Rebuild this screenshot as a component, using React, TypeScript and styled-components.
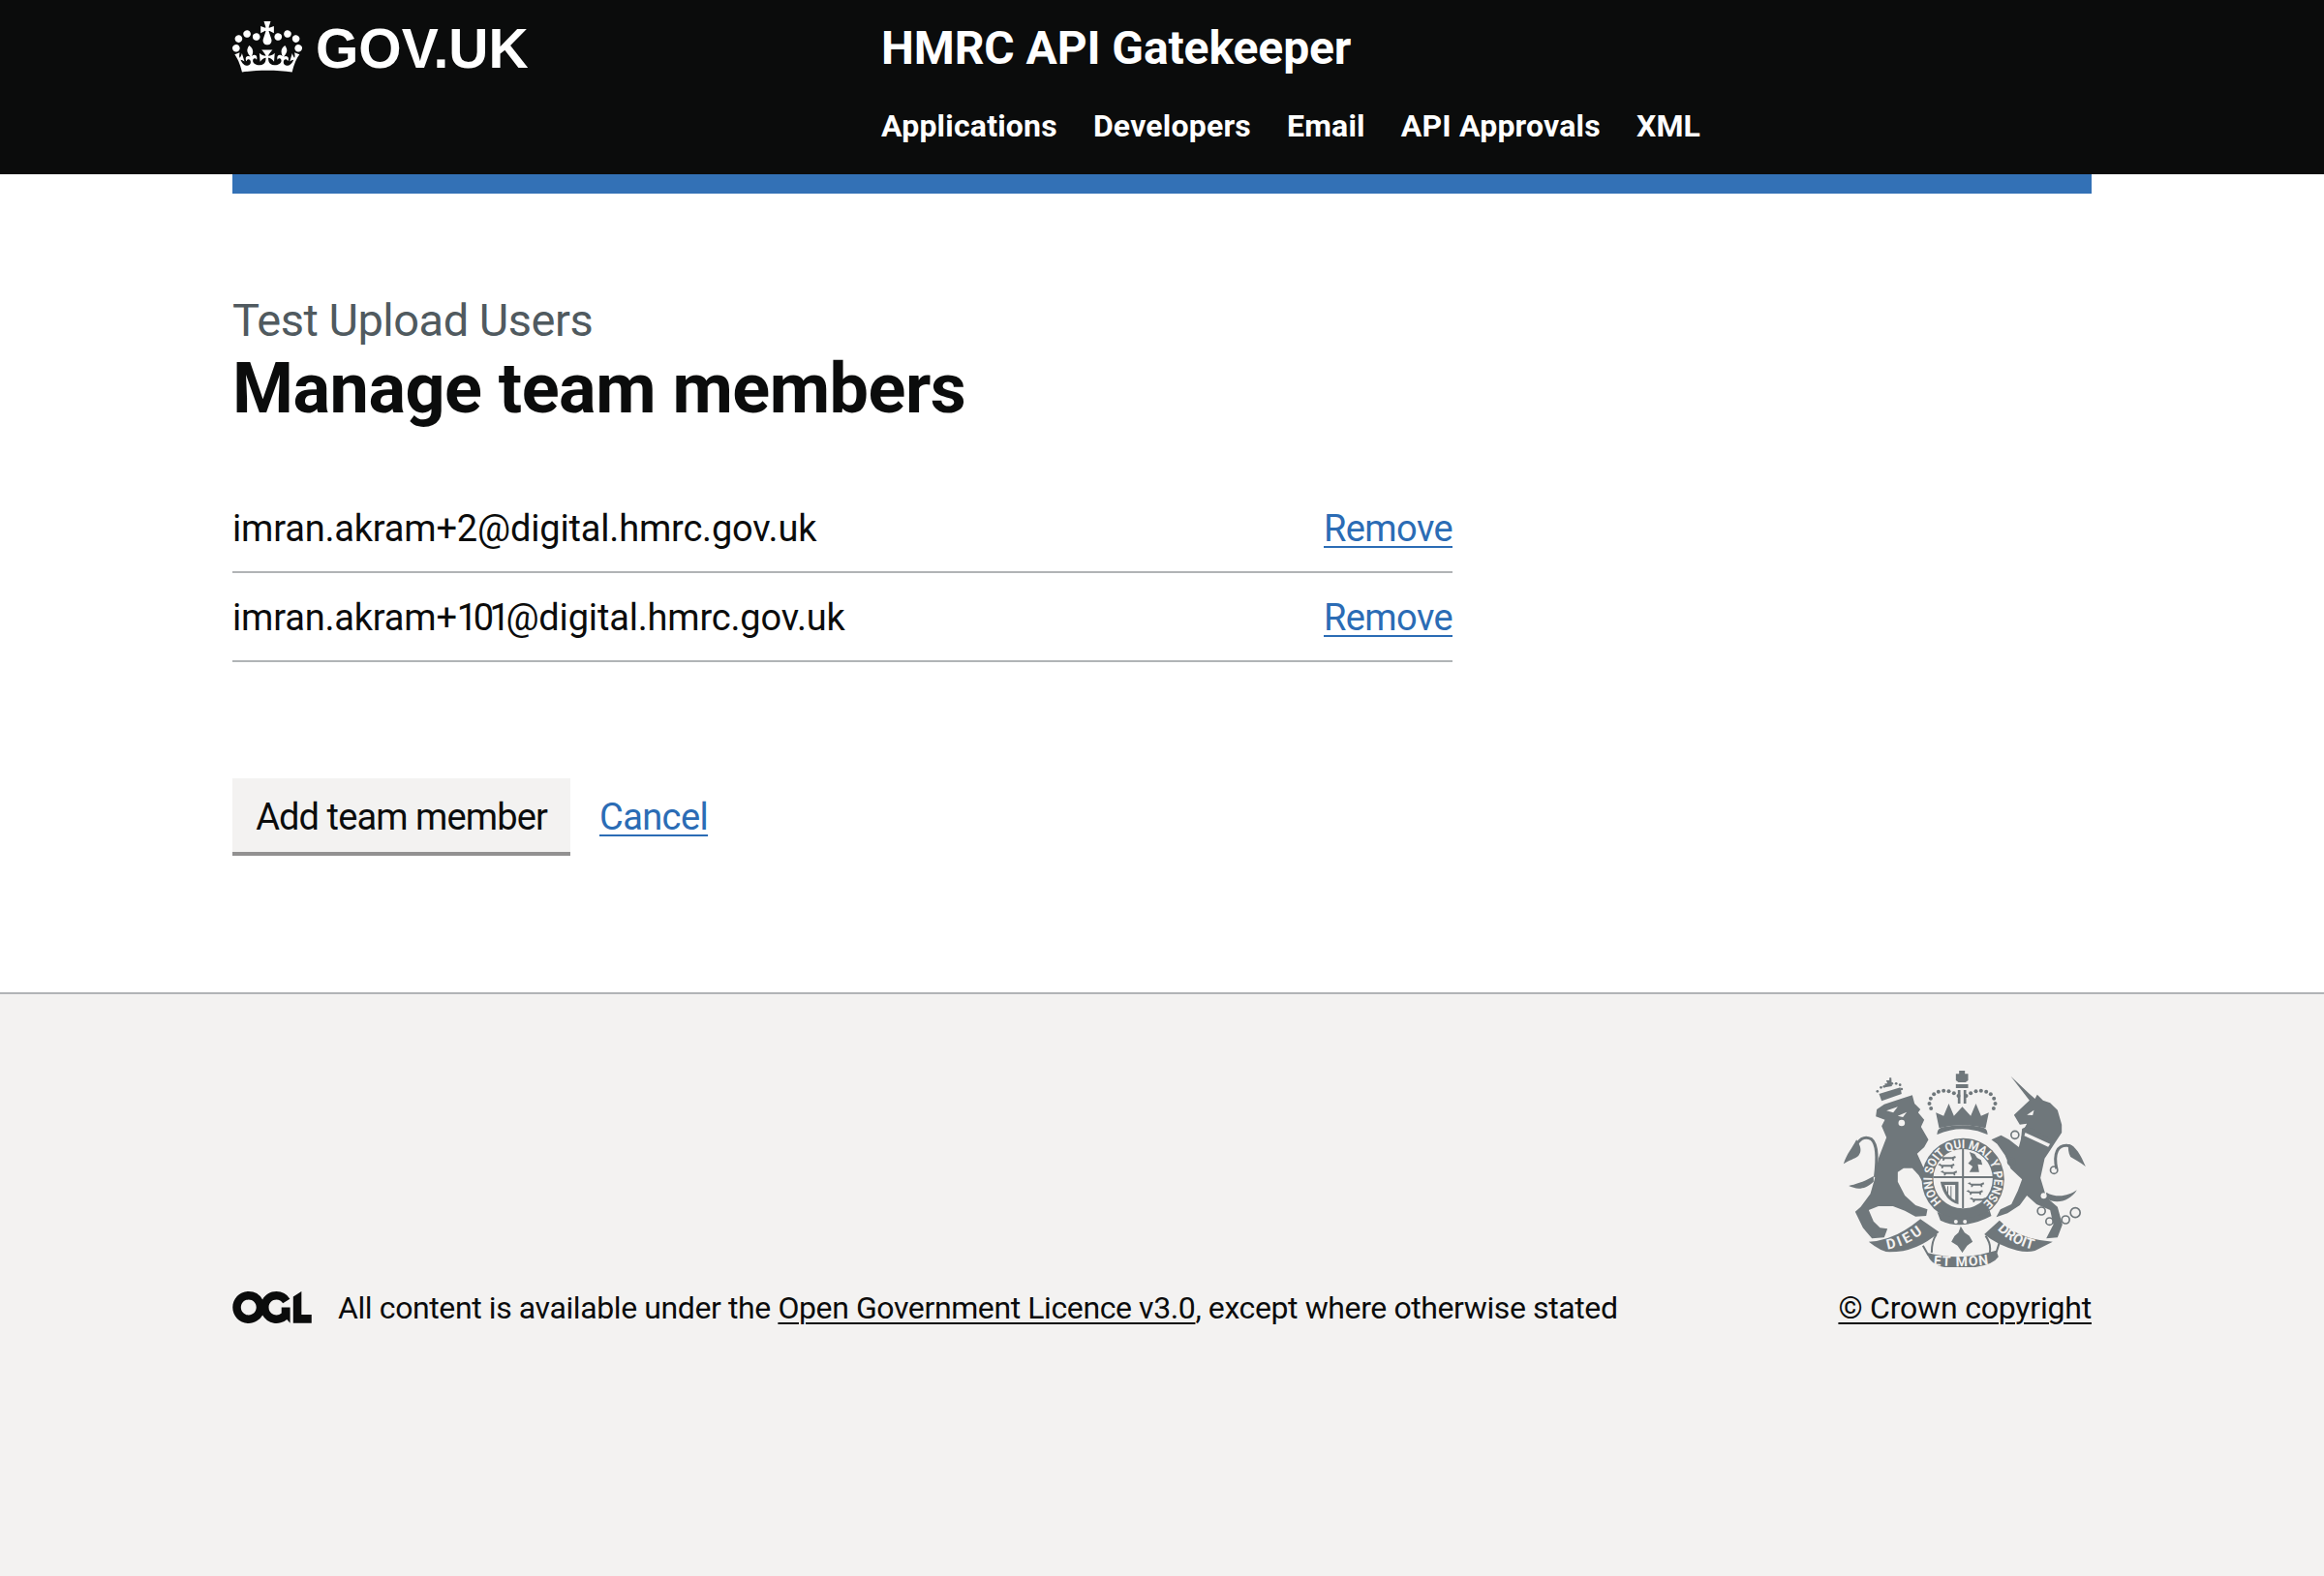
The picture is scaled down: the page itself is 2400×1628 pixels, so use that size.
import styled, { createGlobalStyle } from 'styled-components';

const members = [
  { user: 'imran.akram+', tag: '2', domain: '@digital.hmrc.gov.uk' },
  { user: 'imran.akram+', tag: '101', domain: '@digital.hmrc.gov.uk' },
];
const navItems = ['Applications', 'Developers', 'Email', 'API Approvals', 'XML'];

const CROWN =
  'M25 30.2c3.5 1.5 7.7-.2 9.1-3.7 1.5-3.6-.2-7.8-3.9-9.2-3.6-1.4-7.6.3-9.1 3.9-1.4 3.5.3 7.5 3.9 9zM9 39.5c3.6 1.5 7.8-.2 9.2-3.7 1.5-3.6-.2-7.8-3.9-9.1-3.6-1.5-7.6.2-9.1 3.8-1.4 3.5.3 7.5 3.8 9zM4.4 57.2c3.5 1.5 7.7-.2 9.1-3.8 1.5-3.6-.2-7.7-3.9-9.1-3.6-1.5-7.6.2-9.1 3.8-1.4 3.5.3 7.6 3.9 9.1zm38.3-21.4c3.5 1.5 7.7-.2 9.1-3.8 1.5-3.6-.2-7.7-3.9-9.1-3.6-1.5-7.6.2-9.1 3.8-1.3 3.6.4 7.7 3.9 9.1zm64.4-5.6c-3.6 1.5-7.8-.2-9.1-3.7-1.5-3.6.2-7.8 3.8-9.2 3.6-1.4 7.7.3 9.2 3.9 1.3 3.5-.4 7.5-3.9 9zm15.9 9.3c-3.6 1.5-7.7-.2-9.1-3.7-1.5-3.6.2-7.8 3.7-9.1 3.6-1.5 7.7.2 9.2 3.8 1.5 3.5-.3 7.5-3.8 9zm4.7 17.7c-3.6 1.5-7.8-.2-9.2-3.8-1.5-3.6.2-7.7 3.9-9.1 3.6-1.5 7.7.2 9.2 3.8 1.3 3.5-.4 7.6-3.9 9.1zM89.3 35.8c-3.6 1.5-7.8-.2-9.2-3.8-1.4-3.6.2-7.7 3.9-9.1 3.6-1.5 7.7.2 9.2 3.8 1.4 3.6-.3 7.7-3.9 9.1zM69.7 17.7l8.9 4.7V9.3l-8.9 2.8c-.2-.3-.5-.6-.9-.9L72.4 0H59.6l3.6 11.2c-.3.3-.6.5-.9.9l-8.8-2.8v13.1l8.8-4.7c.3.3.6.7.9.9l-5 15.4v.1c-.2.8-.4 1.6-.4 2.4 0 4.1 3.1 7.5 7 8.1h.2c.3 0 .7.1 1 .1.4 0 .7 0 1-.1h.2c4-.6 7.1-4.1 7.1-8.1 0-.8-.1-1.7-.4-2.4V34l-5.1-15.4c.4-.2.7-.6 1-.9zM66 92.8c16.9 0 32.8 1.1 47.1 3.2 4-16.9 8.9-26.7 14-33.5l-9.6-3.4c1 4.9 1.1 7.2 0 10.2-1.5-1.4-3-4.3-4.2-8.7L108.6 76c2.8-2 5-3.2 7.5-3.3-4.4 9.4-10 11.9-13.6 11.2-4.3-.8-6.3-4.6-5.6-7.9 1-4.7 5.7-5.9 8-.5 4.3-8.7-3-11.4-7.6-8.8 7.1-7.2 7.9-13.5 2.1-21.1-8 6.1-8.1 12.3-4.5 20.8-4.7-5.4-12.1-2.5-9.5 6.2 3.4-5.2 7.9-2 7.2 3.1-.6 4.3-6.4 7.8-13.5 7.2-10.3-.9-10.9-8-11.2-13.8 2.5-.5 7.1 1.8 11 7.3L80.2 60c-4.1 4.4-8 5.3-12.3 5.4 1.4-4.4 8-11.6 8-11.6H55.5s6.4 7.2 7.9 11.6c-4.2-.1-8-1-12.3-5.4l1.4 16.4c3.9-5.5 8.5-7.7 10.9-7.3-.3 5.8-.9 12.8-11.1 13.8-7.2.6-12.9-2.9-13.5-7.2-.7-5 3.8-8.3 7.1-3.1 2.7-8.7-4.6-11.6-9.4-6.2 3.7-8.5 3.6-14.7-4.6-20.8-5.8 7.6-5 13.9 2.2 21.1-4.7-2.6-11.9.1-7.7 8.8 2.3-5.5 7.1-4.2 8.1.5.7 3.3-1.3 7.1-5.7 7.9-3.5.7-9-1.8-13.5-11.2 2.5.1 4.7 1.3 7.5 3.3l-4.7-15.4c-1.2 4.4-2.7 7.2-4.3 8.7-1.1-3-.9-5.3 0-10.2l-9.5 3.4c5 6.9 9.9 16.7 14 33.5 14.8-2.1 30.8-3.2 47.7-3.2z';

const OGL =
  'M421.5 142.8V.1l-50.7 32.3v161.1h112.4v-50.7zm-122.3-9.6A47.12 47.12 0 0 1 221 97.8c0-26 21.1-47.1 47.1-47.1 16.7 0 31.4 8.7 39.7 21.8l42.7-27.2A97.63 97.63 0 0 0 268.1 0c-36.5 0-68.3 20.1-85.1 49.7A98 98 0 0 0 97.8 0C43.9 0 0 43.9 0 97.8s43.9 97.8 97.8 97.8c36.5 0 68.3-20.1 85.1-49.7a97.76 97.76 0 0 0 149.6 25.4l19.4 22.2V97.8h-52.7v35.4zM97.8 145c-26 0-47.1-21.1-47.1-47.1s21.1-47.1 47.1-47.1 47.2 21 47.2 47S123.8 145 97.8 145';

// pearls on the arches of the royal crown
const crownDots = [
  [343, 165], [338, 150], [342, 134], [352, 121], [366, 113], [382, 110], [398, 112], [414, 118], [428, 126],
  [537, 165], [542, 150], [538, 134], [528, 121], [514, 113], [498, 110], [482, 112], [466, 118], [452, 126],
];
const lionCrownDots = [
  [177, 112], [188, 100], [198, 97], [210, 92], [222, 88], [235, 88], [247, 92], [252, 105],
];
const passantRows = [
  [368, 312], [364, 336], [372, 358], [456, 394], [452, 418], [462, 441],
];

const RoyalArms = () => (
  <ArmsSvg viewBox="70 45 755 615" aria-hidden="true">
    <defs>
      <path id="garterArc" d="M 376 454 A 96 96 0 1 1 502 460" />
      <path id="ribbonLeft" d="M 208 602 Q 275 592 335 535" />
      <path id="ribbonMid" d="M 350 650 Q 435 660 528 646" />
      <path id="ribbonRight" d="M 548 540 Q 595 590 668 604" />
      <path id="passant" d="M0 3 L8 0 L11 4 L40 4 L50 0 L52 6 L46 8 L46 15 L42 15 L40 10 L18 10 L15 15 L11 15 L11 9 Z" />
    </defs>
    {/* lion */}
    <path d="M175 168 L198 152 L250 135 L285 124 L292 150 L310 168 L303 178 L322 200 L312 222 L335 262 L322 285 L300 305 L318 345 L345 378 L342 405 L332 412 L318 395 L305 372 L285 350 L258 350 L240 362 L240 392 L262 435 L295 465 L332 478 L328 498 L295 500 L262 482 L225 468 L180 468 L150 480 L165 515 L185 535 L208 538 L198 565 L160 568 L132 535 L108 485 L125 470 L155 430 L168 385 L180 320 L205 255 L190 220 L200 200 L172 190 Z" />
    <path d="M170 378 C176 330 180 278 158 260 C135 248 118 262 108 288" fill="none" stroke="#6f777b" strokeWidth="9" />
    <path d="M72 337 C82 305 98 290 112 262 C128 285 128 300 118 312 C105 322 90 325 72 337 Z" />
    <path d="M165 392 C135 420 110 415 88 405 C108 400 130 395 165 375 Z" />
    <circle cx="252" cy="210" r="10" fill="#f3f2f1" />
    <path d="M205 172 L240 160 L226 178 Z M240 188 L268 176 L256 192 Z" fill="#f3f2f1" />
    {/* lion crown */}
    <path d="M190 142 L182 120 L248 100 L252 120 Z" />
    <path d="M200 100 L200 88 L208 88 L204 78 L214 78 L214 70 L220 70 L222 96 Z" />
    {lionCrownDots.map(([cx, cy]) => (
      <circle key={`${cx}-${cy}`} cx={cx} cy={cy} r="4" />
    ))}
    {/* unicorn */}
    <path d="M590 65 L648 120 L665 135 L672 122 L690 140 L712 148 L735 170 L748 215 L748 240 L728 270 L712 295 L695 320 L682 380 L700 440 L735 470 L750 525 L735 565 L700 568 L722 525 L712 480 L670 462 L640 435 L618 465 L580 490 L545 502 L558 478 L592 462 L612 420 L625 385 L590 352 L572 310 L548 275 L530 262 L560 248 L585 262 L615 285 L628 235 L640 212 L618 215 L600 185 L635 152 L648 140 Z" />
    <path d="M625 228 L642 220 L725 268 L712 292 L655 265 L622 258 Z" />
    <path d="M635 240 L712 275 L706 284 L632 250 Z" fill="#f3f2f1" />
    <path d="M640 185 L662 170 L658 186 Z" fill="#f3f2f1" />
    <path d="M732 352 C722 305 735 278 765 280 C772 280 780 285 785 292" fill="none" stroke="#6f777b" strokeWidth="9" />
    <path d="M768 276 C790 278 808 312 822 345 C805 332 790 325 775 315 C768 302 768 290 768 276 Z" />
    <path d="M700 425 C735 445 770 435 795 418 C775 450 735 465 700 445 Z" />
    <g fill="none" stroke="#6f777b" strokeWidth="5">
      <circle cx="685" cy="483" r="12" />
      <circle cx="710" cy="515" r="11" />
      <circle cx="760" cy="510" r="12" />
      <circle cx="790" cy="488" r="15" />
      <circle cx="603" cy="247" r="12" />
      <circle cx="724" cy="356" r="11" />
      <circle cx="592" cy="330" r="11" />
    </g>
    <circle cx="692" cy="436" r="9" fill="#f3f2f1" />
    <circle cx="716" cy="403" r="7" fill="#f3f2f1" />
    {/* royal crown */}
    {crownDots.map(([cx, cy]) => (
      <circle key={`${cx}-${cy}`} cx={cx} cy={cy} r="6" />
    ))}
    <path d="M358 178 L382 188 L398 150 L414 188 L440 160 L466 188 L482 150 L498 188 L522 178 L512 226 Q440 208 368 226 Z" />
    <path d="M428 84 L420 78 L420 58 L430 58 L430 48 L448 48 L448 58 L458 58 L458 78 L450 84 Z" />
    <path d="M420 90 H458 V102 H420 Z M426 108 H434 V150 H426 Z M444 108 H452 V150 H444 Z" />
    <path d="M362 246 Q360 225 385 222 Q440 212 495 222 Q520 225 518 246 Q440 212 362 246 Z" />
    {/* shield and garter */}
    <circle cx="442" cy="385" r="128" />
    <circle cx="442" cy="383" r="92" fill="#f3f2f1" />
    <path d="M350 378 H536 M442 290 V474" stroke="#6f777b" strokeWidth="6" />
    {passantRows.map(([x, y]) => (
      <use key={`${x}-${y}`} href="#passant" x={x} y={y} />
    ))}
    <path d="M462 300 L478 306 L486 318 L498 325 L502 340 L488 338 L492 362 L462 362 L472 345 L458 335 L470 322 Z" />
    <path d="M372 392 L428 392 L428 462 Q385 452 372 392 Z M385 402 L418 402 L418 450 Q395 440 385 402 Z" fillRule="evenodd" />
    <path d="M395 406 V440 M405 406 V446" stroke="#6f777b" strokeWidth="3" />
    <ArmsText fontSize="38">
      <textPath href="#garterArc" textLength="462" lengthAdjust="spacingAndGlyphs">
        HONI SOIT QUI MAL Y PENSE
      </textPath>
    </ArmsText>
    <path d="M362 486 Q440 525 525 482 L530 498 Q440 545 372 512 Z" />
    <circle cx="420" cy="516" r="6" fill="#f3f2f1" />
    <circle cx="448" cy="516" r="6" fill="#f3f2f1" />
    {/* ribbon */}
    <path d="M150 578 Q230 575 310 508 L368 548 Q300 610 215 610 Q190 610 150 578 Z" />
    <path d="M508 555 L555 512 Q610 570 720 578 L665 606 Q640 612 610 605 Q550 590 508 555 Z" />
    <path d="M330 612 Q435 640 545 605 L552 625 Q535 650 480 657 L385 657 Q340 650 330 612 Z" />
    <path d="M318 590 L335 620 M360 555 Q345 575 345 612 M512 560 Q530 585 525 612 M555 580 L545 612" fill="none" stroke="#6f777b" strokeWidth="6" />
    <path d="M435 530 L447 550 L462 560 L472 578 L455 590 L440 612 L425 590 L406 578 L416 560 L428 550 Z" />
    <ArmsText fontSize="44">
      <textPath href="#ribbonLeft" textLength="122" lengthAdjust="spacing">DIEU</textPath>
    </ArmsText>
    <ArmsText fontSize="42">
      <textPath href="#ribbonMid" textLength="172" lengthAdjust="spacing">ET MON</textPath>
    </ArmsText>
    <ArmsText fontSize="44">
      <textPath href="#ribbonRight" textLength="128" lengthAdjust="spacing">DROIT</textPath>
    </ArmsText>
  </ArmsSvg>
);

const App = () => {
  return (
    <Page>
      <GlobalStyle />
      <Header>
        <HeaderInner>
          <LogoLink href="#">
            <CrownIcon viewBox="0 0 132 97" aria-hidden="true">
              <path d={CROWN} />
            </CrownIcon>
            GOV.UK
          </LogoLink>
          <HeaderContent>
            <ServiceName href="#">HMRC API Gatekeeper</ServiceName>
            <Nav>
              {navItems.map((item) => (
                <NavLink href="#" key={item}>
                  {item}
                </NavLink>
              ))}
            </Nav>
          </HeaderContent>
        </HeaderInner>
      </Header>
      <Container>
        <BlueBar />
        <Main>
          <Caption>Test Upload Users</Caption>
          <Heading>Manage team members</Heading>
          <MemberList>
            {members.map((m) => (
              <MemberRow key={m.tag}>
                <span>
                  {m.user}
                  <Tag $narrow={m.tag.length > 1}>{m.tag}</Tag>
                  {m.domain}
                </span>
                <BlueLink href="#">Remove</BlueLink>
              </MemberRow>
            ))}
          </MemberList>
          <Actions>
            <Button>Add team member</Button>
            <BlueLink href="#">Cancel</BlueLink>
          </Actions>
        </Main>
      </Container>
      <Footer>
        <FooterInner>
          <Licence>
            <OglIcon viewBox="0 0 483.2 195.7" aria-hidden="true">
              <path d={OGL} />
            </OglIcon>
            <span>
              All content is available under the <FooterLink href="#">Open Government Licence v3.0</FooterLink>, except
              where otherwise stated
            </span>
          </Licence>
          <Copyright>
            <RoyalArms />
            <FooterLink href="#">© Crown copyright</FooterLink>
          </Copyright>
        </FooterInner>
      </Footer>
    </Page>
  );
};

const GlobalStyle = createGlobalStyle`
  html, body {
    margin: 0;
    padding: 0;
    background: #fff;
  }
  body {
    font-family: Roboto, "Noto Sans", Arial, sans-serif;
    color: #0b0c0c;
  }
`;

const Page = styled.div`
  display: flex;
  flex-direction: column;
  min-height: 1628px;
`;

const Header = styled.header`
  height: 180px;
  background: #0b0c0c;
`;

const HeaderInner = styled.div`
  display: flex;
  width: 1920px;
  margin: 0 auto;
`;

const LogoLink = styled.a`
  display: flex;
  align-items: center;
  gap: 14px;
  width: 670px;
  height: 100px;
  font-family: "Liberation Sans", Arial, sans-serif;
  font-size: 57px;
  font-weight: 700;
  color: #fff;
  text-decoration: none;
`;

const CrownIcon = styled.svg`
  width: 72px;
  height: 53px;
  margin-bottom: 4px;
  fill: #fff;
`;

const HeaderContent = styled.div`
  display: flex;
  flex-direction: column;
  padding-top: 20px;
`;

const ServiceName = styled.a`
  font-size: 48px;
  line-height: 60px;
  font-weight: 700;
  letter-spacing: -0.1px;
  color: #fff;
  text-decoration: none;
`;

const Nav = styled.nav`
  display: flex;
  gap: 37px;
  margin-top: 26px;
`;

const NavLink = styled.a`
  font-size: 32px;
  line-height: 48px;
  font-weight: 700;
  letter-spacing: 0.2px;
  color: #fff;
  text-decoration: none;
`;

const Container = styled.div`
  width: 1920px;
  margin: 0 auto;
`;

const BlueBar = styled.div`
  height: 20px;
  background: #3371b6;
`;

const Main = styled.main`
  padding: 106px 0 141px;
`;

const Caption = styled.div`
  font-size: 47px;
  line-height: 50px;
  letter-spacing: -0.5px;
  color: #505a5f;
  margin-bottom: 6px;
`;

const Heading = styled.h1`
  margin: 0 0 58px;
  font-size: 72px;
  line-height: 80px;
  font-weight: 700;
  letter-spacing: -0.5px;
`;

const MemberList = styled.div`
  width: 1260px;
`;

const MemberRow = styled.div`
  display: flex;
  align-items: center;
  justify-content: space-between;
  box-sizing: border-box;
  height: 92px;
  padding-top: 2px;
  border-bottom: 2px solid #b1b4b6;
  font-size: 38px;
  letter-spacing: -0.18px;
`;

const Tag = styled.span<{ $narrow: boolean }>`
  letter-spacing: ${(p) => (p.$narrow ? '-4.5px' : 'inherit')};
`;

const BlueLink = styled.a`
  font-size: 38px;
  letter-spacing: -0.6px;
  color: #2b6cb5;
  text-decoration: underline;
  text-decoration-thickness: 2px;
  text-underline-offset: 5px;
`;

const Actions = styled.div`
  display: flex;
  align-items: center;
  gap: 30px;
  height: 80px;
  margin-top: 120px;
`;

const Button = styled.button`
  width: 349px;
  height: 76px;
  margin-bottom: 4px;
  padding: 3px 0 0;
  border: none;
  box-shadow: 0 4px 0 #929191;
  background: #f3f2f1;
  font-family: inherit;
  font-size: 38px;
  letter-spacing: -0.9px;
  color: #0b0c0c;
`;

const Footer = styled.footer`
  flex: 1;
  border-top: 2px solid #b1b4b6;
  background: #f3f2f1;
  padding-top: 78px;
`;

const FooterInner = styled.div`
  display: flex;
  align-items: flex-end;
  justify-content: space-between;
  width: 1920px;
  margin: 0 auto;
`;

const Licence = styled.div`
  display: flex;
  align-items: center;
  gap: 27px;
  padding-top: 2px;
  font-size: 32px;
  line-height: 40px;
  letter-spacing: -0.4px;
`;

const OglIcon = styled.svg`
  width: 82px;
  height: 33px;
  margin-bottom: 2px;
  fill: #0b0c0c;
`;

const FooterLink = styled.a`
  color: #0b0c0c;
  text-decoration: underline;
  text-decoration-thickness: 2px;
  text-underline-offset: 4px;
`;

const Copyright = styled.div`
  display: flex;
  flex-direction: column;
  align-items: flex-end;
  gap: 21px;
  font-size: 32px;
  line-height: 40px;
  letter-spacing: -0.2px;
`;

const ArmsSvg = styled.svg`
  width: 252px;
  height: 205px;
  margin-right: 5px;
  overflow: visible;
  fill: #6f777b;
`;

const ArmsText = styled.text`
  fill: #f3f2f1;
  font-family: Roboto, sans-serif;
  font-weight: 700;
`;

export default App;
